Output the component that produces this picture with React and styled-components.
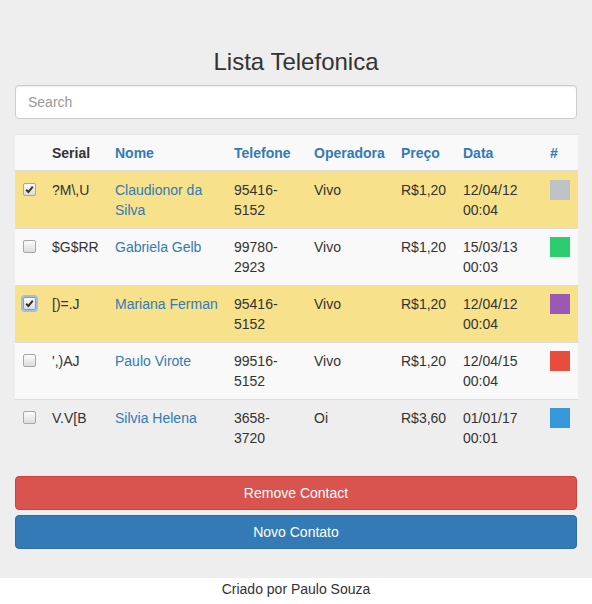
import React from 'react';
import styled, { createGlobalStyle } from 'styled-components';

const GlobalStyle = createGlobalStyle`
    * { box-sizing: border-box; }
    body {
        margin: 0;
        background: #fff;
        font-family: "Liberation Sans", Arial, Helvetica, sans-serif;
        font-size: 14px;
        line-height: 20px;
        color: #333;
    }
`;

const Jumbotron = styled.div`
    background: #eee;
    padding: 49px 15px 29px;
`;
const Title = styled.h3`
    margin: 0 0 10px;
    text-align: center;
    font-size: 24px;
    font-weight: 400;
    line-height: 26px;
    color: #333;
`;
const Search = styled.input`
    display: block;
    width: 100%;
    height: 34px;
    padding: 6px 12px;
    font: inherit;
    color: #555;
    background: #fff;
    border: 1px solid #ccc;
    border-radius: 4px;
    box-shadow: inset 0 1px 1px rgba(0,0,0,.075);
    outline: none;
    &::placeholder { color: #999; }
`;
const Table = styled.table`
    width: 100%;
    margin: 15px 0 20px;
    border-collapse: separate;
    border-spacing: 0;
    table-layout: fixed;
`;
const Th = styled.th`
    width: ${p => p.$w}px;
    padding: 8px 8px 7px;
    text-align: left;
    font-weight: 700;
    color: ${p => p.$link ? '#337ab7' : '#333'};
    border-top: 1px solid #e4e4e4;
    border-bottom: 2px solid #ddd;
    background: #f9f9f9;
    vertical-align: bottom;
`;
const Row = styled.tr`
    background: ${p => p.$selected ? '#f7e18b' : p.$striped ? '#f9f9f9' : 'transparent'};
`;
const Td = styled.td`
    padding: 8px;
    vertical-align: top;
    border-top: ${p => p.$first ? 0 : 1}px solid #ddd;
    color: ${p => p.$link ? '#337ab7' : '#333'};
    word-wrap: break-word;
`;
const Check = styled.span`
    display: block;
    width: 13px;
    height: 13px;
    margin-top: 3px;
    border: 1px solid ${p => p.$focused ? '#7b9fd1' : '#a6a6a6'};
    border-radius: 2px;
    background: linear-gradient(#fcfcfc, #dcdcdc);
    box-shadow: ${p => p.$focused ? '0 0 0 2px #9fbde8' : 'none'};
    svg { display: block; }
`;
const Swatch = styled.div`
    width: 20px;
    height: 20px;
    background: ${p => p.$color};
`;
const Button = styled.button`
    display: block;
    width: 100%;
    height: 34px;
    margin-top: ${p => p.$first ? 0 : 5}px;
    padding: 6px 12px;
    font: inherit;
    color: #fff;
    text-align: center;
    border-radius: 4px;
    border: 1px solid ${p => p.$variant === 'danger' ? '#d43f3a' : '#2e6da4'};
    background: ${p => p.$variant === 'danger' ? '#d9534f' : '#337ab7'};
`;
const Footer = styled.footer`
    padding: 1px 0;
    text-align: center;
    color: #333;
`;

const contatos = [
    { serial: '?M\\,U', nome: 'Claudionor da Silva', tel: '95416-5152', op: 'Vivo', preco: 'R$1,20', data: '12/04/12 00:04', cor: '#bdc3c7', sel: true },
    { serial: '$G$RR', nome: 'Gabriela Gelb', tel: '99780-2923', op: 'Vivo', preco: 'R$1,20', data: '15/03/13 00:03', cor: '#2ecc71' },
    { serial: '[)=.J', nome: 'Mariana Ferman', tel: '95416-5152', op: 'Vivo', preco: 'R$1,20', data: '12/04/12 00:04', cor: '#9b59b6', sel: true, focus: true },
    { serial: "',)AJ", nome: 'Paulo Virote', tel: '99516-5152', op: 'Vivo', preco: 'R$1,20', data: '12/04/15 00:04', cor: '#e74c3c' },
    { serial: 'V.V[B', nome: 'Silvia Helena', tel: '3658-3720', op: 'Oi', preco: 'R$3,60', data: '01/01/17 00:01', cor: '#3498db' },
];

export default function App() {
    return (
    <>
        <GlobalStyle />
        <Jumbotron>
            <Title>Lista Telefonica</Title>
            <Search placeholder='Search' />
            <Table>
                <thead>
                    <tr>
                        <Th $w={29}></Th>
                        <Th $w={63}>Serial</Th>
                        <Th $w={119} $link>Nome</Th>
                        <Th $w={80} $link>Telefone</Th>
                        <Th $w={87} $link>Operadora</Th>
                        <Th $w={62} $link>Preço</Th>
                        <Th $w={87} $link>Data</Th>
                        <Th $w={36} $link>#</Th>
                    </tr>
                </thead>
                <tbody>
                    {contatos.map((c, i) => {
                        const first = i === 0;
                        return (
                            <Row key={i} $selected={c.sel} $striped={i % 2 === 1}>
                                <Td $first={first}>
                                    <Check $focused={c.focus}>
                                        {c.sel && (
                                            <svg width='11' height='11' viewBox='0 0 11 11'>
                                                <path d='M2.2 5.8 L4.4 8 L8.8 2.6' fill='none' stroke='#333' strokeWidth='2' />
                                            </svg>
                                        )}
                                    </Check>
                                </Td>
                                <Td $first={first}>{c.serial}</Td>
                                <Td $first={first} $link>{c.nome}</Td>
                                <Td $first={first}>{c.tel}</Td>
                                <Td $first={first}>{c.op}</Td>
                                <Td $first={first}>{c.preco}</Td>
                                <Td $first={first}>{c.data}</Td>
                                <Td $first={first}><Swatch $color={c.cor} /></Td>
                            </Row>
                        );
                    })}
                </tbody>
            </Table>
            <Button $first $variant='danger'>Remove Contact</Button>
            <Button $variant='primary'>Novo Contato</Button>
        </Jumbotron>
        <Footer>Criado por Paulo Souza</Footer>
    </>
    );
}
